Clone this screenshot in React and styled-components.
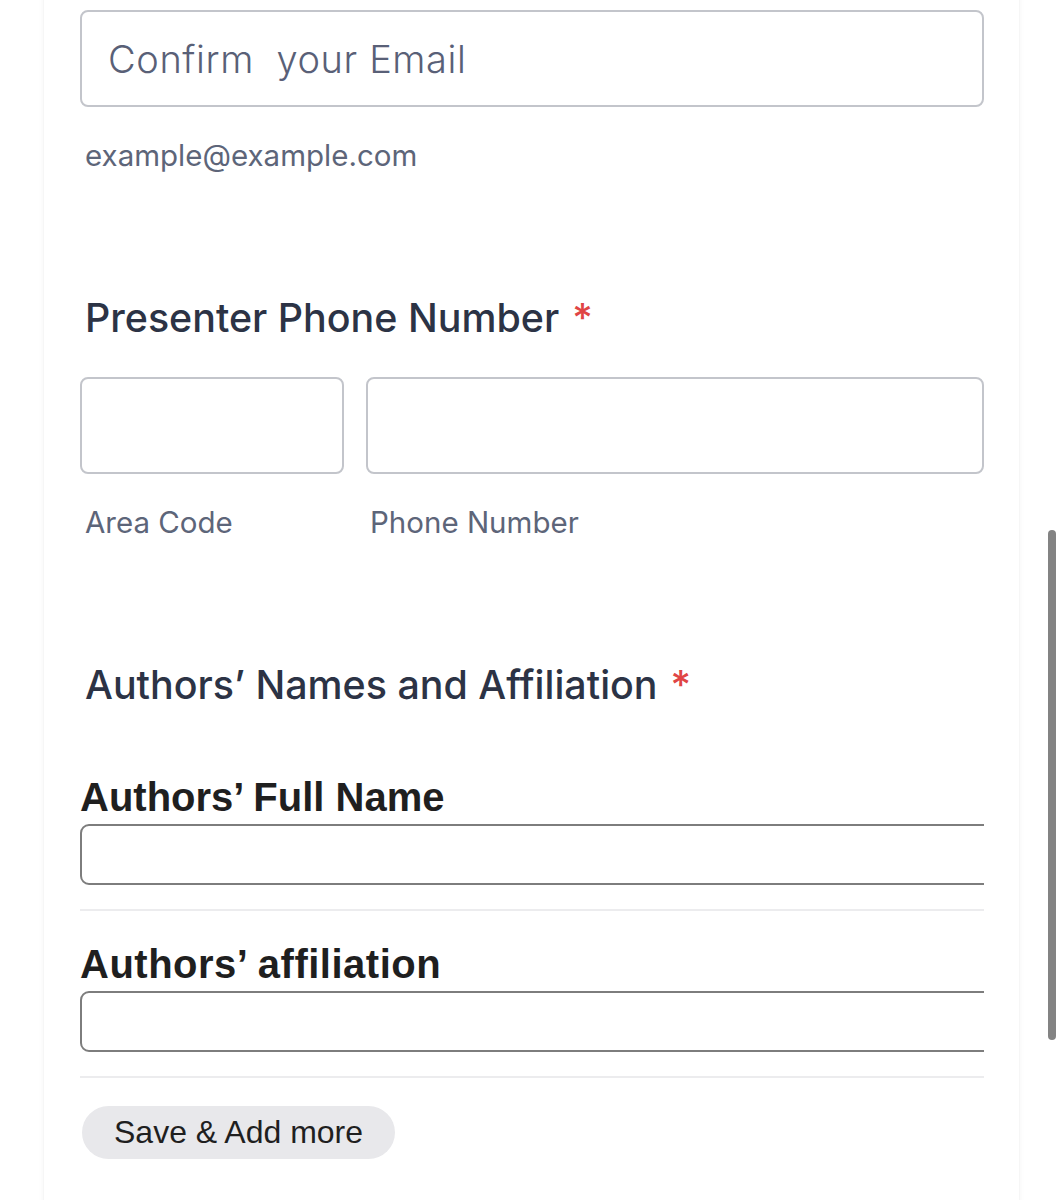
import React from "react";
import styled, { createGlobalStyle } from "styled-components";

const Global = createGlobalStyle`
  html, body { margin: 0; padding: 0; background: #ffffff; }
  body { font-family: "Inter", "Liberation Sans", sans-serif; }
  * { box-sizing: border-box; }
`;

const Page = styled.div`
  position: relative;
  width: 1063px;
  height: 1200px;
  overflow: hidden;
  background: #ffffff;
  padding: 0 44px;
`;

const Card = styled.div`
  width: 975px;
  height: 1260px;
  margin-top: -20px;
  background: #ffffff;
  box-shadow: 0 0 6px rgba(0, 0, 0, 0.06), 0 0 1px rgba(0, 0, 0, 0.08);
  padding: 30px 35px 0 36px;
  display: flex;
  flex-direction: column;
`;

const TextInput = styled.div`
  height: 97px;
  width: ${(p) => (p.$w ? p.$w + "px" : "100%")};
  flex: ${(p) => (p.$grow ? 1 : "none")};
  border: 2px solid #c3c5cb;
  border-radius: 8px;
  background: #fff;
  display: flex;
  align-items: center;
  padding-left: 26px;
  font-size: 38px;
  font-weight: 300;
  color: #596077;
  letter-spacing: 0.6px;
  white-space: pre;
`;

const SubLabel = styled.div`
  font-size: 29.5px;
  color: #5d6579;
  margin-top: ${(p) => p.$mt ?? 30}px;
  padding-left: 5px;
  line-height: 36px;
  width: ${(p) => (p.$w ? p.$w + "px" : "auto")};
`;

const Heading = styled.div`
  font-size: 39.4px;
  font-weight: 500;
  color: #2c3345;
  padding-left: 5px;
  line-height: 44px;
  margin-top: ${(p) => p.$mt}px;
`;

const Star = styled.span`
  color: #e04545;
  margin-left: 13px;
`;

const Row = styled.div`
  display: flex;
  gap: ${(p) => p.$gap ?? 22}px;
  margin-top: ${(p) => p.$mt ?? 0}px;
`;

const Clip = styled.div`
  width: 904px;
  overflow: hidden;
  display: flex;
  flex-direction: column;
  margin-top: ${(p) => p.$mt ?? 0}px;
`;

const BoldLabel = styled.div`
  font-family: "Liberation Sans", Arial, sans-serif;
  font-weight: 700;
  font-size: 40px;
  color: #1f1f1f;
  line-height: 44px;
  margin-bottom: 5px;
  letter-spacing: ${(p) => p.$ls ?? 0}px;
`;

const PlainInput = styled.div`
  width: 940px;
  height: 61px;
  flex: none;
  border: 2px solid #7d7d7d;
  border-radius: 9px;
  background: #fff;
`;

const Divider = styled.div`
  height: 2px;
  flex: none;
  background: #ececee;
  margin-top: 24px;
  margin-bottom: ${(p) => p.$mb ?? 0}px;
`;

const Button = styled.button`
  align-self: flex-start;
  margin-left: 2px;
  margin-top: 28px;
  height: 53px;
  padding: 0 32px;
  border: none;
  border-radius: 27px;
  background: #e8e8eb;
  font-family: "Liberation Sans", Arial, sans-serif;
  font-size: 32px;
  color: #1f1f1f;
`;

const Scrollbar = styled.div`
  position: absolute;
  left: 1048px;
  top: 530px;
  width: 8px;
  height: 510px;
  border-radius: 4px;
  background: #838383;
`;

export default function App() {
  return (
    <>
      <Global />
      <Page>
        <Card>
          <TextInput>{"Confirm  your Email"}</TextInput>
          <SubLabel $mt={30}>example@example.com</SubLabel>

          <Heading $mt={123}>
            Presenter Phone Number<Star>*</Star>
          </Heading>
          <Row $mt={37}>
            <TextInput $w={264} />
            <TextInput $grow />
          </Row>
          <Row $mt={30} $gap={0}>
            <SubLabel $mt={0} $w={285}>Area Code</SubLabel>
            <SubLabel $mt={0}>Phone Number</SubLabel>
          </Row>

          <Heading $mt={123}>
            Authors’ Names and Affiliation<Star>*</Star>
          </Heading>

          <Clip $mt={68}>
            <BoldLabel>Authors’ Full Name</BoldLabel>
            <PlainInput />
            <Divider $mb={31} />
            <BoldLabel $ls={0.5}>Authors’ affiliation</BoldLabel>
            <PlainInput />
            <Divider />
          </Clip>
          <Button>Save &amp; Add more</Button>
        </Card>
        <Scrollbar />
      </Page>
    </>
  );
}
